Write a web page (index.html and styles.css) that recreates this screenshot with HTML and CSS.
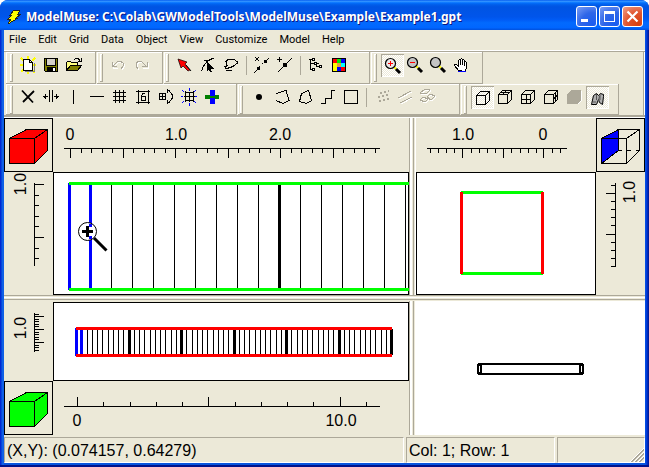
FILE: index.html
```html
<!DOCTYPE html>
<html lang="en">
<head>
<meta charset="utf-8">
<title>ModelMuse</title>
<link rel="stylesheet" href="styles.css">
</head>
<body>
<div class="window">
  <header class="titlebar">
    <svg class="app-icon" width="18" height="18" viewBox="0 0 18 18"><path d="M8 2h6l-2 4h3l-5 4h2L2 16l3-5H2l4-4H4z" fill="#ff0" stroke="#222" stroke-width="1"/></svg>
    <h1 class="title">ModelMuse: C:\Colab\GWModelTools\ModelMuse\Example\Example1.gpt</h1>
    <div class="window-buttons">
      <button class="winbtn" aria-label="Minimize"><svg width="19" height="19" viewBox="0 0 19 19"><path d="M4 12h7v3H4z" fill="#fff"/></svg></button>
      <button class="winbtn" aria-label="Maximize"><svg width="19" height="19" viewBox="0 0 19 19"><path d="M4 4h11v11H4zM5 7v7h9V7z" fill="#fff" fill-rule="evenodd"/></svg></button>
      <button class="winbtn close" aria-label="Close"><svg class="smooth" width="19" height="19" viewBox="0 0 19 19"><path d="M4.500 4.500l10 10M14.500 4.500l-10 10" stroke="#fff" stroke-width="2.200"/></svg></button>
    </div>
  </header>

  <nav class="menubar">
    <button>File</button><button>Edit</button><button>Grid</button><button>Data</button><button>Object</button><button>View</button><button>Customize</button><button>Model</button><button>Help</button>
  </nav>

  <div class="toolbars">
    <div class="toolrow">
      <div class="band">
        <button class="tool" aria-label="New"><svg viewBox="0 0 23 23"><path d="M4 4l3 3M11 2v3M18 4l-3 3M3 11h4M19 11h-3M4 18l3-3M18 19l-3-3M11 20v-3" stroke="#ff0" stroke-width="2"/><path d="M8 17.500h9V9" stroke="#808080" fill="none"/><path d="M6.500 5.500h6l3 3v8h-9zM12.500 5.500v3h3" fill="#fff" stroke="#000"/></svg></button>
        <button class="tool" aria-label="Save"><svg viewBox="0 0 23 23"><path d="M4.500 4.500h13v13h-12l-1-1z" fill="#808000" stroke="#000"/><path d="M6 5h10v7H6zM7 13h9v5H7z"/><path d="M7 5h8v6H7z" fill="#d4d0c8"/><path d="M13 14h2v3h-2z" fill="#fff"/></svg></button>
        <button class="tool" aria-label="Open"><svg viewBox="0 0 23 23"><path d="M3.500 16.500v-8l1-1h3l1 1h6v3" fill="#ffff80" stroke="#000"/><path d="M3.500 16.500l4-5h11l-4 5z" fill="#808000" stroke="#000"/><path d="M11 5.500l2-1h2l2 2M18.500 4v4M15 7.500h4" fill="none" stroke="#000"/></svg></button>
      </div>
      <div class="band">
        <button class="tool" aria-label="Undo"><svg viewBox="0 0 23 23"><path d="M6 9v5h5M7 13l4-4 3-1 3 2v3l-2 3" fill="none" stroke="#fff"/><path d="M5.500 8v4.500H10M6 12l4-4 3-1 3 2v3l-2 3" fill="none" stroke="#aca899"/></svg></button>
        <button class="tool" aria-label="Redo"><svg viewBox="0 0 23 23"><path d="M18 9v5h-5M17 13l-4-4-3-1-3 2v3l2 3" fill="none" stroke="#fff"/><path d="M17 8v4.500h-5M16 12l-4-4-3-1-3 2v3l2 3" fill="none" stroke="#aca899"/></svg></button>
      </div>
      <div class="band edit-band">
        <button class="tool" aria-label="Select"><svg class="smooth" viewBox="0 0 23 23"><path d="M5 5l9 3-2 2 5 6-2 1-5-5-2 2z" fill="#f00" stroke="#000" stroke-width=".7"/><path d="M13 11l5 6" stroke="#000"/></svg></button>
        <button class="tool" aria-label="Select vertices"><svg viewBox="0 0 23 23"><path d="M5.500 17l2-5 4-5 6-3M8 6.500h4" fill="none" stroke="#000"/><path d="M11 8l7 7h-3l1 3h-2l-1-3-2 2z"/></svg></button>
        <button class="tool" aria-label="Lasso"><svg viewBox="0 0 23 23"><path d="M9 14.500h-2l-1-2 3-1M8 10.500l-1-3 2-2h6l3 2v2l-4 3-6 2M7 16.500h6" fill="none" stroke="#000"/></svg></button>
        <span class="sep"></span>
        <button class="tool" aria-label="Delete segment"><svg viewBox="0 0 23 23"><path d="M5 3l4 4M9 3l-4 4M4 19l3-3M9 13l1-1M12 10l1-1M17 6l2-2" stroke="#000"/><path d="M7 13h3v3H7zM14 6h3v3h-3z"/></svg></button>
        <button class="tool" aria-label="Insert point"><svg viewBox="0 0 23 23"><path d="M6.500 3v5M4 5.500h5M5 18L19 4" stroke="#000"/><path d="M10 9h4v4h-4z"/></svg></button>
        <span class="sep"></span>
        <button class="tool" aria-label="Data sets"><svg viewBox="0 0 23 23"><path d="M6.500 5v11M5 5.500h4M6 9.500h4M6 15.500h3M12 9.500h3M12.500 9v3h3" fill="none" stroke="#000"/><path d="M8.500 4.500h2v2h-2zM10.500 8.500h2v2h-2zM15.500 11.500h2v2h-2zM8.500 14.500h2v2h-2z" fill="#fff" stroke="#000"/></svg></button>
        <button class="tool" aria-label="Color grid"><svg viewBox="0 0 23 23"><path d="M5 4h14v14H5z"/><path d="M6 5h4v4H6zM14 13h4v4h-4z" fill="#f00"/><path d="M10 5h4v4h-4z" fill="#00f000"/><path d="M14 5h4v4h-4zM10 13h4v4h-4z" fill="#00f"/><path d="M6 9h4v4H6z" fill="#ff0"/><path d="M10 9h4v4h-4z" fill="#e0a040"/><path d="M14 9h4v4h-4z" fill="#0ff"/><path d="M6 13h4v4H6z" fill="#ff0"/></svg></button>
      </div>
      <div class="band">
        <button class="tool pressed" aria-label="Zoom in"><svg class="smooth" viewBox="0 0 23 23"><path d="M13 13l2 2" stroke="#ff0" stroke-width="2"/><path d="M15 15l4 4" stroke="#000" stroke-width="3"/><circle cx="9.500" cy="9.500" r="5" fill="#e8e8e8" stroke="#000" stroke-width="1.200"/><path d="M7 9.500h5M9.500 7v5" stroke="#f00"/></svg></button>
        <button class="tool" aria-label="Zoom out"><svg class="smooth" viewBox="0 0 23 23"><path d="M12 12l2 2" stroke="#ff0" stroke-width="2"/><path d="M14 14l4 4" stroke="#000" stroke-width="3"/><circle cx="8.500" cy="8.500" r="5" fill="#c4c4c4" stroke="#000" stroke-width="1.200"/><path d="M6 8.500h5" stroke="#f00"/></svg></button>
        <button class="tool" aria-label="Zoom"><svg class="smooth" viewBox="0 0 23 23"><path d="M12 12l2 2" stroke="#ff0" stroke-width="2"/><path d="M14 14l4 4" stroke="#000" stroke-width="3"/><circle cx="8.500" cy="8.500" r="5" fill="#c4c4c4" stroke="#000" stroke-width="1.200"/></svg></button>
        <button class="tool" aria-label="Pan"><svg viewBox="0 0 23 23"><path d="M8.500 16.500l-4-5v-1h2l2 2v-6l1-1 1 1v4-5l1-1 1 1v5-4l1-1 1 1v5-3l1-1 1 1v6l-2 3z" fill="#fff" stroke="#000"/><path d="M8 17.500h8" stroke="#00f"/></svg></button>
      </div>
    </div>
    <div class="toolrow">
      <div class="band grid-band">
        <button class="tool" aria-label="Delete grid line"><svg class="smooth" viewBox="0 0 23 23"><path d="M5 4.500l11 12M17 5L6 16" stroke="#000" stroke-width="1.800"/></svg></button>
        <button class="tool" aria-label="Move line"><svg viewBox="0 0 23 23"><path d="M9.500 4v12M12.500 4v12M3 10.500h5M14 10.500h5M5.500 8v5M16.500 8v5M4.500 9.500v2M17.500 9.500v2" stroke="#000"/></svg></button>
        <button class="tool" aria-label="Add column"><svg viewBox="0 0 23 23"><path d="M10.500 4v14" stroke="#000"/></svg></button>
        <button class="tool" aria-label="Add row"><svg viewBox="0 0 23 23"><path d="M4 10.500h14" stroke="#000"/></svg></button>
        <button class="tool" aria-label="Subdivide"><svg viewBox="0 0 23 23"><path d="M6.500 4v13M10.500 4v13M14.500 4v13M4 6.500h13M4 10.500h13M4 14.500h13" stroke="#000"/></svg></button>
        <button class="tool" aria-label="Set widths"><svg viewBox="0 0 23 23"><path d="M6.500 4v14M16.500 4v14M4 5.500h14M4 16.500h14" stroke="#000"/><path d="M13 7.500h-2l-2 3v3l1 1h3v-4H9" fill="none" stroke="#000"/></svg></button>
        <button class="tool" aria-label="Rotate grid"><svg viewBox="0 0 23 23"><path d="M4.500 7.500h6v6h-6zM7.500 7v7M4 10.500h7M12 4.500h2l3 4v4l-3 4h-2M12.500 3v4M12.500 14v4" fill="none" stroke="#000"/></svg></button>
        <button class="tool" aria-label="Generate grid"><svg viewBox="0 0 23 23"><path d="M4 4l2 2M11 2v3M18 4l-2 2M3 10h2M17 10h2M4 17l2-2M18 17l-2-2M11 17v3" stroke="#00f"/><path d="M7.500 6.500h8v8h-8zM11.500 6v10M6 10.500h11M7.500 5v11M15.500 5v11" fill="none" stroke="#000"/></svg></button>
        <button class="tool" aria-label="Smooth"><svg viewBox="0 0 23 23"><path d="M9 4h5v14H9z" fill="#00f"/><path d="M4 9h14v4H4z" fill="#008000"/><path d="M9 9h5v1H9zM9 12h5v1H9z" fill="#00f"/></svg></button>
      </div>
      <div class="band object-band">
        <button class="tool" aria-label="Point object"><svg class="smooth" viewBox="0 0 23 23"><circle cx="12" cy="11" r="3"/></svg></button>
        <button class="tool" aria-label="Polyline object"><svg viewBox="0 0 23 23"><path d="M6 7.500l10-3 3 10-6 3-7-3" fill="none" stroke="#000"/></svg></button>
        <button class="tool" aria-label="Polygon object"><svg viewBox="0 0 23 23"><path d="M8.500 7.500l7-3 3 10-5 3-7-2z" fill="none" stroke="#000"/></svg></button>
        <button class="tool" aria-label="Straight line object"><svg viewBox="0 0 23 23"><path d="M5 17.500h4.500v-5h6v-8H19" fill="none" stroke="#000"/></svg></button>
        <button class="tool" aria-label="Rectangle object"><svg viewBox="0 0 23 23"><path d="M5.500 4.500h13v13h-13z" fill="none" stroke="#000"/></svg></button>
        <span class="sep"></span>
        <button class="tool" aria-label="Point sections"><svg viewBox="0 0 23 23"><path d="M10 6h2v2h-2zM14 5h2v2h-2zM18 4h1v2h-1zM8 10h2v2H8zM12 9h2v2h-2zM16 8h2v2h-2zM9 14h2v2H9zM13 13h2v2h-2zM17 12h2v2h-2z" fill="#aca899"/></svg></button>
        <button class="tool" aria-label="Line sections"><svg viewBox="0 0 23 23"><path d="M6 13l13-7M8 18l11-6" stroke="#fff"/><path d="M5 12l13-7M7 17l12-6" stroke="#aca899"/></svg></button>
        <button class="tool" aria-label="Polygon sections"><svg viewBox="0 0 23 23"><path d="M5 8l5-4 5 1-4 4zM12 12l3-3 5 2-4 4zM5 15l3-3 5 2-3 3z" fill="none" stroke="#fff"/><path d="M4 7l5-4 5 1-4 4zM11 11l3-3 5 2-4 4zM4 14l3-3 5 2-3 3z" fill="none" stroke="#aca899"/></svg></button>
      </div>
      <div class="band">
        <button class="tool pressed" aria-label="Show none"><svg viewBox="0 0 23 23"><path d="M5.500 9.500h9v9h-9zM5.500 9.500l4-4h9v9l-4 4M14.500 9.500l4-4" fill="none" stroke="#000"/></svg></button>
        <button class="tool" aria-label="Show top"><svg viewBox="0 0 23 23"><path d="M4.500 8.500h9v9h-9zM4.500 8.500l4-4h9v9l-4 4M13.500 8.500l4-4M9 8l4-4M6 6.500h9" fill="none" stroke="#000"/></svg></button>
        <button class="tool" aria-label="Show front"><svg viewBox="0 0 23 23"><path d="M4.500 8.500h9v9h-9zM4.500 8.500l4-4h9v9l-4 4M13.500 8.500l4-4M9 8.500v9M4 13h10" fill="none" stroke="#000"/></svg></button>
        <button class="tool" aria-label="Show side"><svg viewBox="0 0 23 23"><path d="M4.500 8.500h9v9h-9zM4.500 8.500l4-4h9v9l-4 4M13.500 8.500l4-4M15.500 7v9M13.500 13l4-4" fill="none" stroke="#000"/></svg></button>
        <button class="tool" aria-label="Shell"><svg viewBox="0 0 23 23"><path d="M6 9l4-4h9v9l-4 4H6z" fill="#fff"/><path d="M4 8l4-4h10v10l-4 4H4z" fill="#aca899"/></svg></button>
        <button class="tool pressed" aria-label="Show objects"><svg class="smooth" viewBox="0 0 23 23"><path d="M5.500 18.500l2-9 3-2 2 2 2-2 3 1v2l-1 8-3-2-1-3-2 5z" fill="#b0b0b0" stroke="#000"/><path d="M10.500 8v6M13.500 10l-1 5M7 16h3M14 8v6" stroke="#555"/></svg></button>
      </div>
    </div>
  </div>

  <main class="views">
    <section class="pane top-view">
      <button class="cube" aria-label="Top view"><svg width="47" height="52" viewBox="5 119 47 52"><g stroke="#000" fill="#f00"><path d="M9.500 138.500l17-9h21l-13 9zM34.500 138.500l13-9v21l-13 13z"/><path d="M9.500 138.500h25v25h-25z"/></g></svg></button>
      <svg class="ruler" width="356" height="54" viewBox="53 118 356 54">
        <path class="ink" d="M64 148.500h316M70.500 149v9M123.500 149v9M175.500 149v9M228.500 149v9M280.500 149v9M333.500 149v9M81.500 149v4M91.500 149v4M102.500 149v4M112.500 149v4M133.500 149v4M144.500 149v4M154.500 149v4M165.500 149v4M186.500 149v4M196.500 149v4M207.500 149v4M217.500 149v4M238.500 149v4M249.500 149v4M259.500 149v4M270.500 149v4M291.500 149v4M301.500 149v4M312.500 149v4M322.500 149v4M343.500 149v4M354.500 149v4M364.500 149v4M375.500 149v4"/>
        <text x="70" y="140">0</text><text x="176" y="140">1.0</text><text x="280" y="140">2.0</text>
      </svg>
      <svg class="ruler" width="49" height="123" viewBox="4 172 49 123">
        <path class="ink" d="M34.500 183v83M35 184.500h9M35 237.500h9M35 195.500h4M35 205.500h4M35 216.500h4M35 226.500h4M35 248.500h4M35 258.500h4"/>
        <text transform="translate(26 184) rotate(-90)">1.0</text>
      </svg>
      <div class="canvas"><svg width="356" height="123" viewBox="53 172 356 123">
        <path class="ink" d="M111.500 184v105M132.500 184v105M153.500 184v105M174.500 184v105M195.500 184v105M216.500 184v105M237.500 184v105M258.500 184v105M300.500 184v105M321.500 184v105M342.500 184v105M363.500 184v105M384.500 184v105M405.500 184v105"/>
        <path class="ink thick" d="M279.500 184v105"/>
        <path class="thick blue" d="M69.500 183v107M90.500 184v105"/>
        <path class="thick green" d="M69 183.500h340M69 289.500h340"/>
        <circle class="smooth" cx="87.500" cy="231.500" r="9" fill="#fff" stroke="#000"/>
        <path d="M90.500 224v3M90.500 236v3" class="thick blue"/>
        <path d="M82 231.500h11M87.500 226v11" class="ink thick"/>
        <path class="smooth" d="M94 238l12.500 12.500" stroke="#000" stroke-width="3"/>
      </svg></div>
    </section>
    <div class="vsplit"></div>
    <section class="pane side-view">
      <svg class="ruler" width="180" height="54" viewBox="416 118 180 54">
        <path class="ink" d="M427 148.500h140M462.500 149v9M503.500 149v9M543.500 149v9M430.500 149v4M438.500 149v4M446.500 149v4M454.500 149v4M471.500 149v4M479.500 149v4M487.500 149v4M495.500 149v4M511.500 149v4M520.500 149v4M528.500 149v4M536.500 149v4M552.500 149v4M560.500 149v4"/>
        <text x="463" y="140">1.0</text><text x="543" y="140">0</text>
      </svg>
      <button class="cube" aria-label="Side view"><svg width="47" height="52" viewBox="597 119 47 52"><path d="M601.500 138.500l17-9v21l-17 13z" fill="#00f" stroke="#000"/><path d="M601.500 138.500h25v25h-25zM618.500 129.500h21v21M626.500 138.500l13-9M626.500 163.500l13-13" fill="none" stroke="#000"/><path d="M618 150.500h21" stroke="#000" stroke-dasharray="4 5"/></svg></button>
      <div class="canvas"><svg width="180" height="123" viewBox="416 172 180 123">
        <path class="thick green" d="M461 192.500h82M461 273.500h82"/>
        <path class="thick red" d="M461.500 192v82M542.500 192v82"/>
      </svg></div>
      <svg class="ruler" width="49" height="123" viewBox="596 172 49 123">
        <path class="ink" d="M615.500 183v84M606 193.500h9M606 234.500h9M611 185.500h4M611 201.500h4M611 209.500h4M611 217.500h4M611 225.500h4M611 242.500h4M611 250.500h4M611 258.500h4M611 266.500h4"/>
        <text transform="translate(635 192) rotate(-90)">1.0</text>
      </svg>
    </section>
    <div class="hsplit"></div>
    <section class="pane front-view">
      <svg class="ruler" width="49" height="79" viewBox="4 302 49 79">
        <path class="ink" d="M34.500 313v39M35 316.500h9M35 329.500h9M35 342.500h9M35 314.500h4M35 319.500h4M35 321.500h4M35 324.500h4M35 326.500h4M35 332.500h4M35 334.500h4M35 337.500h4M35 339.500h4M35 345.500h4M35 347.500h4M35 350.500h4"/>
        <text transform="translate(26 328) rotate(-90)">1.0</text>
      </svg>
      <div class="canvas"><svg width="356" height="79" viewBox="53 302 356 79">
        <defs><g id="cells">
          <path class="ink" d="M87.500 329v26M92.500 329v26M97.500 329v26M102.500 329v26M108.500 329v26M113.500 329v26M118.500 329v26M123.500 329v26M134.500 329v26M139.500 329v26M144.500 329v26M150.500 329v26M155.500 329v26M160.500 329v26M165.500 329v26M171.500 329v26M176.500 329v26"/>
          <path class="ink thick" d="M129.500 329v26M181.500 329v26"/>
        </g></defs>
        <use href="#cells"/><use href="#cells" x="105"/><use href="#cells" x="210"/>
        <path class="ink" d="M186.500 329v26M291.500 329v26"/>
        <path class="thick blue" d="M76.500 328v28M81.500 329v26"/>
        <path class="thick red" d="M76 328.500h316M76 355.500h316"/>
      </svg></div>
      <button class="cube" aria-label="Front view"><svg width="47" height="52" viewBox="5 119 47 52"><g stroke="#000" fill="#0f0"><path d="M9.500 138.500l17-9h21l-13 9zM34.500 138.500l13-9v21l-13 13z"/><path d="M9.500 138.500h25v25h-25z"/></g></svg></button>
      <svg class="ruler" width="356" height="54" viewBox="53 381 356 54">
        <path class="ink" d="M64 406.500h316M77.500 397v9M208.500 397v9M340.500 397v9M103.500 402v4M130.500 402v4M156.500 402v4M182.500 402v4M235.500 402v4M261.500 402v4M287.500 402v4M313.500 402v4M366.500 402v4"/>
        <text x="77" y="426">0</text><text x="341" y="426">10.0</text>
      </svg>
    </section>
    <div class="vsplit"></div>
    <section class="model3d"><svg width="230" height="134" viewBox="415 301 230 134">
      <path d="M479 364h103v1h1v8h-1v1H479v-1h-1v-8h1zM481 364v9M580 364v9" fill="none" stroke="#000" stroke-width="2"/>
    </svg></section>
  </main>

  <footer class="statusbar">
    <span class="status coords">(X,Y): (0.074157, 0.64279)</span>
    <span class="status cell">Col: 1; Row: 1</span>
    <span class="status last"></span>
    <svg class="grip" width="14" height="14" viewBox="0 0 14 14"><path d="M1 14L14 1M5 14l9-9M9 14l5-5" stroke="#aca899" stroke-width="2"/><path d="M0 14L14 0M4 14L14 4M8 14l6-6" stroke="#fff"/></svg>
  </footer>
</div>
</body>
</html>
```
FILE: styles.css
```css
*,
*::before {
  box-sizing: border-box;
}

body {
  margin: 0;
  background: #fff;
  color: #000;
  font-family: "Liberation Sans", Arial, sans-serif;
  font-size: 16px;
}

button {
  margin: 0;
  padding: 0;
  border: 0;
  background: none;
  color: inherit;
  font: inherit;
}

svg {
  display: block;
  flex: none;
  shape-rendering: crispEdges;
}

.smooth {
  shape-rendering: auto;
}

.window {
  display: flex;
  flex-direction: column;
  min-height: 100vh;
  padding: 0 4px 4px;
  border-radius: 8px 8px 0 0;
  background: linear-gradient(90deg, #0019cf, #0855dd 2px, #166aee 3px, #0855dd 4px, #0855dd calc(100% - 4px), #0046e6 calc(100% - 3px), #0033cc calc(100% - 2px), #00138c);
  box-shadow: inset 0 -2px #00138c;
  overflow: hidden;
}

.titlebar {
  display: flex;
  align-items: center;
  height: 30px;
  margin: 0 -4px;
  padding: 3px 6px 0;
  background: linear-gradient(#0058ee, #3593ff 4%, #288eff 6%, #127dff 8%, #036ffc 10%, #0262ee 14%, #0057e5 20%, #0054e3 24%, #0055eb 56%, #005bf5 66%, #026afe 76%, #0066ff 92%, #0050dd);
}

.title {
  flex: 1;
  margin: 0;
  padding-left: 2px;
  color: #fff;
  font: bold 12px/20px "Noto Sans", sans-serif;
  text-shadow: 1px 1px #0a1883;
  white-space: nowrap;
}

.window-buttons {
  display: flex;
  gap: 2px;
}

.winbtn {
  width: 21px;
  height: 21px;
  border: 1px solid #fff;
  border-radius: 3px;
  background: radial-gradient(circle at 80% 90%, #1a5cf0, #2f66e8 50%, #7b9ef5);
}

.winbtn.close {
  background: radial-gradient(circle at 80% 90%, #d84010, #e0552f 50%, #f0a08a);
}

.menubar {
  display: flex;
  height: 20px;
  padding-left: 5px;
  gap: 12px;
  background: #ece9d8;
  font: 11px/19px Roboto, sans-serif;
}

.menubar button {
  align-self: flex-start;
}

.toolbars {
  padding-left: 2px;
  border-top: 1px solid #fff;
  border-bottom: 2px solid #aca899;
  background: #ece9d8;
  box-shadow: inset 0 1px #aca899, inset -1px 0 #fff, inset -2px 0 #aca899;
}

.toolrow {
  display: flex;
  gap: 1px;
  height: 33px;
  padding-top: 1px;
}

.toolrow + .toolrow {
  height: 31px;
  padding-top: 0;
}

.band {
  display: flex;
  align-items: flex-start;
  padding: 2px 9px 0 4px;
  border: solid #aca899;
  border-width: 0 1px 1px 0;
  box-shadow: inset 1px 1px #fff;
}

.band + .band {
  padding-left: 3px;
}

.band.grid-band {
  padding-right: 12px;
}

.band.edit-band {
  padding-left: 2px;
  padding-right: 19px;
}

.band.object-band {
  padding-left: 2px;
  padding-right: 20px;
}

.band::before {
  content: "";
  width: 3px;
  height: 28px;
  margin-right: 4px;
  border: solid #aca899;
  border-width: 0 1px 1px 0;
  box-shadow: inset 1px 1px #fff;
}

.tool {
  flex: none;
  width: 23px;
  height: 23px;
}

.tool svg {
  width: 23px;
  height: 23px;
}

.tool.pressed {
  background: repeating-conic-gradient(#fff 0 25%, #ece9d8 0 50%) 0 0 / 2px 2px;
  box-shadow: inset 1px 1px #aca899, inset -1px -1px #fff;
}

.sep {
  width: 1px;
  height: 19px;
  margin: 2px 3px 0 4px;
  background: #aca899;
}

.views {
  flex: 1;
  display: grid;
  grid-template-columns: minmax(0, 405fr) 6px minmax(0, 230fr);
  grid-template-rows: minmax(177px, 177fr) 6px minmax(134px, 134fr);
  border-top: 1px solid #fff;
  background: #ece9d8;
}

.pane {
  display: grid;
  min-width: 0;
}

.top-view {
  grid-template: 54px minmax(0, 1fr) / 49px minmax(0, 1fr);
}

.side-view {
  grid-template: 54px minmax(0, 1fr) / minmax(0, 1fr) 49px;
  border-left: 1px solid #fff;
}

.front-view {
  grid-template: minmax(0, 1fr) 54px / 49px minmax(0, 1fr);
  padding-top: 1px;
}

.cube {
  border: 1px solid #000;
}

.canvas {
  background: #fff;
  box-shadow: inset 0 0 0 1px #000;
  overflow: hidden;
}

.ruler text {
  font-size: 16px;
  text-anchor: middle;
}

.ink {
  fill: none;
  stroke: #000;
}

.thick {
  fill: none;
  stroke-width: 3px;
}

.blue {
  stroke: #00f;
}

.green {
  stroke: #0f0;
}

.red {
  stroke: #f00;
}

.vsplit {
  background: linear-gradient(90deg, #aca899 1px, #fff 1px 3px, #ece9d8 3px 4px, #aca899 4px 5px, #ece9d8 5px);
}

.hsplit {
  grid-column: 1 / -1;
  background: linear-gradient(#aca899 1px, #ece9d8 1px 2px, #fff 2px 3px, #ece9d8 3px 4px, #aca899 4px 5px, #ece9d8 5px);
}

.model3d {
  background: #fff;
  overflow: hidden;
}

.statusbar {
  display: grid;
  grid-template-columns: minmax(0, 400fr) minmax(0, 149fr) minmax(0, 88fr);
  gap: 2px;
  height: 28px;
  padding-top: 2px;
  background: #ece9d8;
  position: relative;
}

.status {
  padding-left: 2px;
  border: 1px solid;
  border-color: #aca899 #fff #fff #aca899;
  line-height: 25px;
  white-space: nowrap;
  overflow: hidden;
}

.grip {
  position: absolute;
  right: 1px;
  bottom: 1px;
}
```
